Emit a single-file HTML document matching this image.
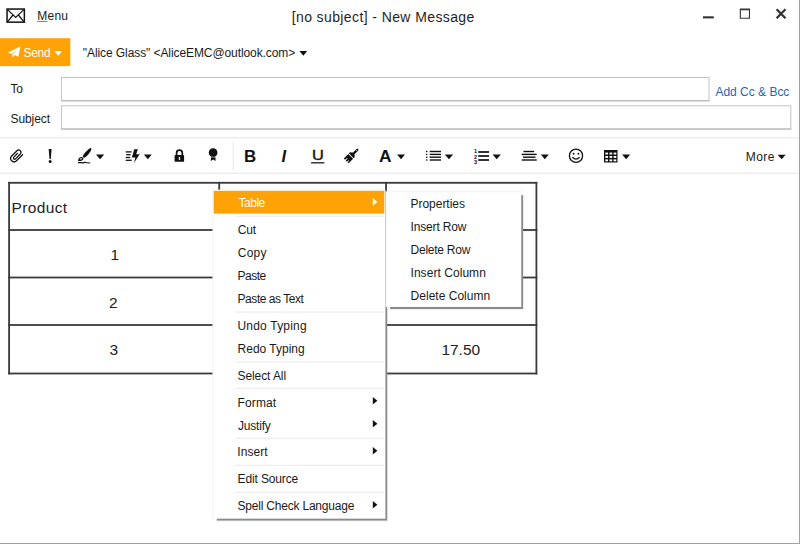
<!DOCTYPE html>
<html><head><meta charset="utf-8"><title>New Message</title>
<style>
*{box-sizing:border-box;margin:0;padding:0}
html,body{width:800px;height:544px;overflow:hidden;background:#fff}
body{font-family:"Liberation Sans",sans-serif;position:relative}
.t{position:absolute;white-space:nowrap;line-height:1}
svg.all{position:absolute;left:0;top:0}
</style></head><body>
<svg class="all" width="800" height="544" viewBox="0 0 800 544">
<rect x="799" y="0" width="1" height="544" fill="#a0a0a0"/>
<rect x="0" y="543" width="800" height="1" fill="#a0a0a0"/>
<g fill="none" stroke="#111" stroke-linejoin="miter"><rect x="7.05" y="9.05" width="17.3" height="13.1" stroke-width="1.5"/><path d="M7.6 9.6 L15.7 17.4 L23.8 9.6 M7.6 21.7 L13.0 15.0 M23.8 21.7 L18.4 15.0" stroke-width="1.2"/></g>
<rect x="703" y="16.3" width="10.8" height="2.1" fill="#333"/>
<path d="M739.8 8.4 H750 V18.8 H739.8 Z M740.9 10.3 V17.7 H748.9 V10.3 Z" fill="#333" fill-rule="evenodd"/>
<path d="M776.6 9.3 L785.5 18.3 M785.5 9.3 L776.6 18.3" stroke="#333" stroke-width="2.3" fill="none"/>
<rect x="0" y="38.2" width="70.3" height="27.9" fill="#ffa205"/>
<path d="M8.0 52.5 L20.5 46.2 L18.3 56.7 L14.5 54.9 L12.6 57.4 L12.2 54.4 L17.2 49.9 L11.4 53.9 Z" fill="#fff"/>
<path d="M54.40 51.05 H62.20 L58.30 55.65 Z" fill="#fff"/>
<path d="M299.40 51.05 H307.20 L303.30 55.65 Z" fill="#111"/>
<rect x="61.5" y="77.5" width="647.5" height="23.3" fill="#fff" stroke="#c4c4c4" stroke-width="1"/>
<rect x="61.0" y="100.3" width="648.5" height="1" fill="#b4b4b8"/>
<rect x="61.5" y="105.8" width="729.3" height="23.2" fill="#fff" stroke="#c4c4c4" stroke-width="1"/>
<rect x="61.0" y="128.5" width="730.3" height="1" fill="#b4b4b8"/>
<rect x="0" y="137.2" width="799" height="1.3" fill="#ececec"/>
<rect x="0" y="172.6" width="799" height="1.3" fill="#ececec"/>
<rect x="232.6" y="142" width="1.2" height="28" fill="#ececec"/>
<g transform="translate(16.5 156.0) rotate(45)"><path d="M3.4 -5.2 V3.4 A3.4 3.4 0 0 1 -3.4 3.4 V-4.1 A2.35 2.35 0 0 1 1.3 -4.1 V2.7 A1.2 1.2 0 0 1 -1.1 2.7 V-2.4" fill="none" stroke="#111" stroke-width="1.25" stroke-linecap="round"/></g>
<path d="M48.7 148.9 H51.6 L50.8 158.9 H49.5 Z" fill="#111"/><circle cx="50.15" cy="161.5" r="1.5" fill="#111"/>
<g fill="#111"><path d="M91 148.1 C92.2 148.9 90.2 152.6 87.6 155.3 C86.4 156.6 85.3 157.4 84.2 157.9 L82.6 156.3 C83.2 154.9 84.6 152.9 86.4 151.2 C88.4 149.2 90.2 147.6 91 148.1 Z"/><path d="M82.2 157 L83.6 158.4 C83.4 160.2 81.6 161.2 78.0 160.9 C78.2 158.2 79.8 156.7 82.2 157 Z M79.6 159.6 C80.8 159.7 81.8 159.3 82.1 158.4 C81.0 158.2 80.0 158.6 79.6 159.6 Z" fill-rule="evenodd"/><path d="M77.8 162.2 C80 161.9 82 162.4 83.6 162.3 C84.6 161.5 85.4 161.8 86.4 162.2 L90.3 162.5 L90.2 163.4 L86.2 163.2 C85.4 162.9 84.8 162.8 84 163.4 C82 163.6 80 163.1 77.9 163.3 Z"/></g>
<path d="M96.00 154.45 H104.20 L100.10 159.15 Z" fill="#111"/>
<rect x="125.7" y="151.25" width="5.9" height="1.3" fill="#111"/>
<rect x="126.2" y="154.05" width="4.4" height="1.3" fill="#111"/>
<rect x="125.7" y="156.85" width="4.5" height="1.3" fill="#111"/>
<rect x="125.7" y="159.65" width="6.1" height="1.3" fill="#111"/>
<path d="M134.3 149.3 H137.9 L136.2 154.3 H139.7 L133.9 162.9 L135.4 157.4 H131.8 Z" fill="#111"/>
<path d="M143.90 154.45 H151.80 L147.85 159.15 Z" fill="#111"/>
<path d="M176.6 155.2 V152.9 A2.85 2.85 0 0 1 182.3 152.9 V155.2" fill="none" stroke="#111" stroke-width="1.7"/>
<rect x="174.6" y="154.9" width="9.5" height="6.9" rx="0.9" fill="#111"/><rect x="178.8" y="156.9" width="1.3" height="3" fill="#fff"/>
<circle cx="213.1" cy="152.7" r="4.35" fill="#111"/><path d="M210.9 157.6 H215.5 V160.9 L213.2 159.4 L210.9 160.9 Z" fill="#111"/><rect x="211.2" y="156.3" width="4" height="1.4" fill="#555"/>
<rect x="311.1" y="162.2" width="13.3" height="1.25" fill="#111"/>
<g transform="translate(351.3 155.8) rotate(45) scale(0.88)" fill="#111"><path d="M-1.3 -9.6 A1.3 1.3 0 0 1 1.3 -9.6 V-4.2 C1.3 -3 3.9 -2.6 3.9 -1.4 V0 H-3.9 V-1.4 C-3.9 -2.6 -1.3 -3 -1.3 -4.2 Z"/><circle cx="0" cy="-8.6" r="0.55" fill="#fff"/><path d="M-3.9 1 H3.9 V8.2 H2.3 V5.8 H1.3 V8.2 H-0.7 V5.2 H-1.7 V8.2 H-3.9 Z"/></g>
<path d="M397.10 154.45 H405.00 L401.05 159.15 Z" fill="#111"/>
<rect x="426" y="150.85" width="1.4" height="1.3" fill="#111"/><rect x="429.7" y="150.80" width="11.3" height="1.4" fill="#111"/>
<rect x="426" y="153.75" width="1.4" height="1.3" fill="#111"/><rect x="429.7" y="153.70" width="11.3" height="1.4" fill="#111"/>
<rect x="426" y="156.55" width="1.4" height="1.3" fill="#111"/><rect x="429.7" y="156.50" width="11.3" height="1.4" fill="#111"/>
<rect x="426" y="159.35" width="1.4" height="1.3" fill="#111"/><rect x="429.7" y="159.30" width="11.3" height="1.4" fill="#111"/>
<path d="M444.80 154.45 H453.10 L448.95 159.15 Z" fill="#111"/>
<rect x="478.2" y="151.15" width="10.8" height="1.7" fill="#111"/>
<rect x="478.2" y="155.15" width="10.8" height="1.7" fill="#111"/>
<rect x="478.2" y="159.15" width="10.8" height="1.7" fill="#111"/>
<text x="473.9" y="153.3" font-family="Liberation Sans, sans-serif" font-weight="bold" font-size="5.6" fill="#111">1</text>
<text x="473.9" y="158.6" font-family="Liberation Sans, sans-serif" font-weight="bold" font-size="5.6" fill="#111">2</text>
<text x="473.9" y="163.8" font-family="Liberation Sans, sans-serif" font-weight="bold" font-size="5.6" fill="#111">3</text>
<path d="M492.60 154.45 H500.90 L496.75 159.15 Z" fill="#111"/>
<rect x="523.5" y="150.80" width="10.7" height="1.4" fill="#111"/>
<rect x="521.7" y="153.70" width="15.0" height="1.4" fill="#111"/>
<rect x="523.0" y="156.50" width="12.5" height="1.4" fill="#111"/>
<rect x="521.7" y="159.30" width="15.0" height="1.4" fill="#111"/>
<path d="M540.80 154.45 H548.80 L544.80 159.15 Z" fill="#111"/>
<circle cx="576" cy="155.75" r="6.6" fill="none" stroke="#111" stroke-width="1.3"/><circle cx="573.6" cy="153.7" r="0.95" fill="#111"/><circle cx="578.4" cy="153.7" r="0.95" fill="#111"/><path d="M572.4 157.2 Q576 161 579.6 157.2" fill="none" stroke="#111" stroke-width="1.3"/>
<rect x="604" y="150" width="13.5" height="12.5" fill="#111"/>
<rect x="605.3" y="152.6" width="2.7" height="1.9" fill="#fff"/>
<rect x="605.3" y="156.0" width="2.7" height="1.9" fill="#fff"/>
<rect x="605.3" y="159.4" width="2.7" height="1.9" fill="#fff"/>
<rect x="609.5" y="152.6" width="2.7" height="1.9" fill="#fff"/>
<rect x="609.5" y="156.0" width="2.7" height="1.9" fill="#fff"/>
<rect x="609.5" y="159.4" width="2.7" height="1.9" fill="#fff"/>
<rect x="613.6" y="152.6" width="2.7" height="1.9" fill="#fff"/>
<rect x="613.6" y="156.0" width="2.7" height="1.9" fill="#fff"/>
<rect x="613.6" y="159.4" width="2.7" height="1.9" fill="#fff"/>
<path d="M622.10 154.45 H630.20 L626.15 159.15 Z" fill="#111"/>
<path d="M777.60 154.65 H785.70 L781.65 159.15 Z" fill="#111"/>
<rect x="8.2" y="181.9" width="529.1" height="1.8" fill="#3a3a3a"/>
<rect x="8.2" y="229.1" width="529.1" height="1.8" fill="#3a3a3a"/>
<rect x="8.2" y="276.6" width="529.1" height="1.8" fill="#3a3a3a"/>
<rect x="8.2" y="324.1" width="529.1" height="1.8" fill="#3a3a3a"/>
<rect x="8.2" y="372.6" width="529.1" height="1.8" fill="#3a3a3a"/>
<rect x="8.2" y="181.9" width="1.8" height="192.5" fill="#3a3a3a"/>
<rect x="218.3" y="181.9" width="1.8" height="192.5" fill="#3a3a3a"/>
<rect x="385.1" y="181.9" width="1.8" height="192.5" fill="#3a3a3a"/>
<rect x="535.5" y="181.9" width="1.8" height="192.5" fill="#3a3a3a"/>
<path d="M384.4 193.6 H387.1 V520.5 H216.9 V517.6 H384.4 Z" fill="#858585"/>
<path d="M384.4 193.1 H387.8 V521.2 H216.4 V517.6 H384.4 Z" fill="#9a9a9a" opacity="0.25"/>
<rect x="212.4" y="189.6" width="173.0" height="329.0" fill="#eef0f5"/>
<rect x="213.4" y="190.6" width="171.7" height="327.7" fill="#fff"/>
<rect x="213.7" y="190.9" width="170.6" height="22.7" fill="#ffa205"/>
<rect x="235" y="215.7" width="149" height="1.1" fill="#ececec"/>
<rect x="235" y="311.5" width="149" height="1.1" fill="#ececec"/>
<rect x="235" y="361.5" width="149" height="1.1" fill="#ececec"/>
<rect x="235" y="387.8" width="149" height="1.1" fill="#ececec"/>
<rect x="235" y="437.8" width="149" height="1.1" fill="#ececec"/>
<rect x="235" y="464.8" width="149" height="1.1" fill="#ececec"/>
<rect x="235" y="491.8" width="149" height="1.1" fill="#ececec"/>
<path d="M372.8 198.10 L377.4 201.90 L372.8 205.70 Z" fill="#fff"/>
<path d="M372.8 396.90 L377.4 400.70 L372.8 404.50 Z" fill="#111"/>
<path d="M372.8 420.00 L377.4 423.80 L372.8 427.60 Z" fill="#111"/>
<path d="M372.8 447.00 L377.4 450.80 L372.8 454.60 Z" fill="#111"/>
<path d="M372.8 500.90 L377.4 504.70 L372.8 508.50 Z" fill="#111"/>
<path d="M520.3 195.3 H523.0 V308.9 H390.1 V306.0 H520.3 Z" fill="#858585"/>
<path d="M520.3 194.8 H523.7 V309.6 H389.6 V306.0 H520.3 Z" fill="#9a9a9a" opacity="0.25"/>
<rect x="385.6" y="191.3" width="135.7" height="115.7" fill="#eef0f5"/>
<rect x="386.6" y="192.3" width="134.4" height="114.4" fill="#fff"/>
</svg>
<div class="t" id="menu" style="left:37.20px;top:10.00px;font-size:12px;color:#1a1a1a;letter-spacing:0.261px;"><span style="text-decoration:underline;text-decoration-color:#888">M</span>enu</div>
<div class="t" id="title" style="left:291.67px;top:10.00px;font-size:14px;color:#1f1f1f;letter-spacing:0.397px;">[no subject] - New Message</div>
<div class="t" id="send" style="left:23.55px;top:47.00px;font-size:12px;color:#fff;letter-spacing:-0.306px;">Send</div>
<div class="t" id="from" style="left:82.83px;top:47.00px;font-size:12px;color:#1a1a1a;letter-spacing:-0.086px;">"Alice Glass" &lt;AliceEMC@outlook.com&gt;</div>
<div class="t" id="to" style="left:10.56px;top:82.84px;font-size:12px;color:#1a1a1a;letter-spacing:-0.383px;">To</div>
<div class="t" id="subj" style="left:10.47px;top:113.00px;font-size:12px;color:#1a1a1a;letter-spacing:-0.080px;">Subject</div>
<div class="t" id="cc" style="left:715.47px;top:86.00px;font-size:12px;color:#2466ae;letter-spacing:-0.012px;">Add Cc &amp; Bcc</div>
<div class="t" id="more" style="left:745.80px;top:151.00px;font-size:12px;color:#1a1a1a;letter-spacing:0.427px;">More</div>
<div class="t" id="B" style="left:243.82px;top:148.29px;font-size:16.2px;color:#111;font-weight:bold;transform:scaleX(1.04);transform-origin:0 0">B</div>
<div class="t" id="I" style="left:281.60px;top:148.95px;font-size:16.6px;color:#111;font-weight:bold;font-style:italic">I</div>
<div class="t" id="U" style="left:311.50px;top:147.33px;font-size:15.2px;color:#111;-webkit-text-stroke:0.4px #111;transform:scaleX(1.08);transform-origin:0 0">U</div>
<div class="t" id="A" style="left:379.32px;top:148.29px;font-size:16.2px;color:#111;font-weight:bold;transform:scaleX(1.07);transform-origin:0 0">A</div>
<div class="t" id="prod" style="left:11.43px;top:200.00px;font-size:15.5px;color:#222;letter-spacing:0.374px;">Product</div>
<div class="t" id="c1" style="left:110.41px;top:247.00px;font-size:15.5px;color:#222;">1</div>
<div class="t" id="c2" style="left:109.00px;top:295.00px;font-size:15.5px;color:#222;">2</div>
<div class="t" id="c3" style="left:109.42px;top:342.00px;font-size:15.5px;color:#222;">3</div>
<div class="t" id="c4" style="left:441.41px;top:342.00px;font-size:15.5px;color:#222;letter-spacing:-0.022px;">17.50</div>
<div class="t" id="cm0" style="left:238.52px;top:197.00px;font-size:12px;color:#fff;letter-spacing:-0.479px;">Table</div>
<div class="t" id="cm1" style="left:237.86px;top:224.00px;font-size:12px;color:#1a1a1a;letter-spacing:-0.185px;">Cut</div>
<div class="t" id="cm2" style="left:237.86px;top:247.00px;font-size:12px;color:#1a1a1a;letter-spacing:0.191px;">Copy</div>
<div class="t" id="cm3" style="left:237.58px;top:270.00px;font-size:12px;color:#1a1a1a;letter-spacing:-0.535px;">Paste</div>
<div class="t" id="cm4" style="left:237.58px;top:293.00px;font-size:12px;color:#1a1a1a;letter-spacing:-0.458px;">Paste as Text</div>
<div class="t" id="cm5" style="left:237.50px;top:320.00px;font-size:12px;color:#1a1a1a;letter-spacing:0.194px;">Undo Typing</div>
<div class="t" id="cm6" style="left:237.58px;top:343.00px;font-size:12px;color:#1a1a1a;letter-spacing:-0.004px;">Redo Typing</div>
<div class="t" id="cm7" style="left:237.52px;top:370.00px;font-size:12px;color:#1a1a1a;letter-spacing:-0.092px;">Select All</div>
<div class="t" id="cm8" style="left:237.58px;top:397.00px;font-size:12px;color:#1a1a1a;letter-spacing:0.102px;">Format</div>
<div class="t" id="cm9" style="left:238.09px;top:420.00px;font-size:12px;color:#1a1a1a;letter-spacing:-0.225px;">Justify</div>
<div class="t" id="cm10" style="left:237.26px;top:446.00px;font-size:12px;color:#1a1a1a;letter-spacing:0.082px;">Insert</div>
<div class="t" id="cm11" style="left:237.58px;top:473.00px;font-size:12px;color:#1a1a1a;letter-spacing:-0.137px;">Edit Source</div>
<div class="t" id="cm12" style="left:237.52px;top:500.00px;font-size:12px;color:#1a1a1a;letter-spacing:-0.205px;">Spell Check Language</div>
<div class="t" id="sm0" style="left:410.57px;top:198.00px;font-size:12px;color:#1a1a1a;letter-spacing:-0.041px;">Properties</div>
<div class="t" id="sm1" style="left:410.51px;top:221.00px;font-size:12px;color:#1a1a1a;letter-spacing:-0.150px;">Insert Row</div>
<div class="t" id="sm2" style="left:410.57px;top:244.00px;font-size:12px;color:#1a1a1a;letter-spacing:-0.252px;">Delete Row</div>
<div class="t" id="sm3" style="left:410.51px;top:267.00px;font-size:12px;color:#1a1a1a;letter-spacing:0.054px;">Insert Column</div>
<div class="t" id="sm4" style="left:410.57px;top:290.00px;font-size:12px;color:#1a1a1a;letter-spacing:0.021px;">Delete Column</div>
</body></html>
